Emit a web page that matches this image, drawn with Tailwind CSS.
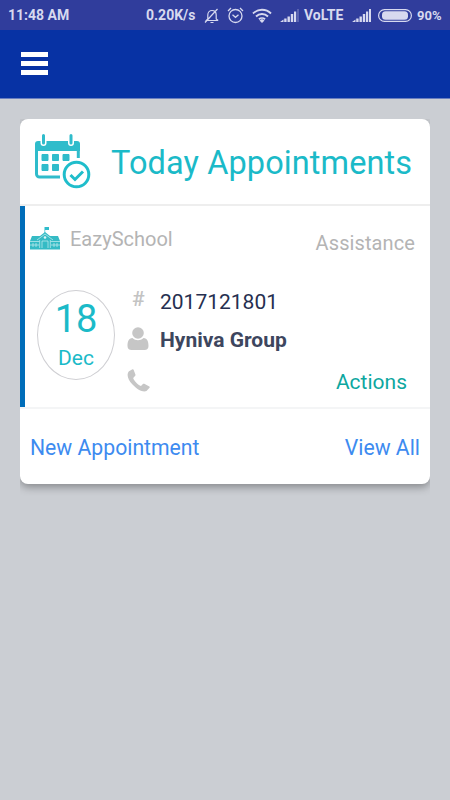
<!DOCTYPE html>
<html lang="en">
  <head>
    <meta charset="UTF-8" />
    <meta name="viewport" content="width=device-width, initial-scale=1.0" />
    <title>Today Appointments</title>
    <script src="https://cdn.jsdelivr.net/npm/@tailwindcss/browser@4"></script>
  </head>
  <body class="bg-[#cbced3] h-screen overflow-hidden font-['Roboto',sans-serif] whitespace-nowrap">
    <!-- Status bar -->
    <div class="h-[30px] bg-[#303d9c] text-[#d7d9ef] flex items-center pl-2 pr-2 pt-px text-[14px] font-bold">
      <span class="w-[138px]">11:48 AM</span>
      <span class="w-[58px]">0.20K/s</span>
      <svg class="w-[16px] h-[16px]" viewBox="0 0 16 16" fill="none" stroke="currentColor" stroke-width="1.2">
        <path d="M1.500 12.500h12.500M3.800 11V7c0-6 8.400-6 8.400 0v4l2 1.500M3.800 11l-1.500 1.500M6.500 14.500h3M1 14.500L13.500 1" />
      </svg>
      <svg class="w-[17px] h-[17px] ml-[7px]" viewBox="0 0 17 17" fill="none" stroke="currentColor" stroke-width="1.300">
        <circle cx="8.500" cy="9" r="6.500" />
        <path d="M5.500 7.800l3 2.500 3-2.500M1 4l3-3M16 4l-3-3" />
      </svg>
      <svg class="w-[20px] h-[15px] ml-[8px]" viewBox="0 0 20 15" fill="none" stroke="currentColor" stroke-width="1.900">
        <path d="M1 5.500a12.700 12.700 0 0 1 18 0M4 8.500a8.500 8.500 0 0 1 12 0M7 11.300a4.300 4.300 0 0 1 6 0" />
        <path d="M10 11l2.500 1.500-2.500 2.500-2.500-2.500z" fill="currentColor" stroke="none" />
      </svg>
      <svg class="w-[19px] h-[13px] ml-[8px]" viewBox="0 0 19 13" fill="currentColor">
        <path d="M0 13l3.500-2.500V13zM4.200 9.500h2.400V13H4.200zM7.500 7.500h2.400V13H7.500zM10.800 5h2.400v8h-2.400zM14 2.500h2.200V13H14z" />
        <path d="M17 0h2v13h-2z" opacity=".25" />
      </svg>
      <span class="ml-[5px] w-[40px]">VoLTE</span>
      <svg class="w-[19px] h-[13px] ml-[8px]" viewBox="0 0 19 13" fill="currentColor">
        <path d="M0 13l3.500-2.500V13zM4.200 9.500h2.400V13H4.200zM7.500 7.500h2.400V13H7.500zM10.800 5h2.400v8h-2.400zM14 2.500h2.200V13H14zM17 0h2v13h-2z" />
      </svg>
      <svg class="w-[34px] h-[13px] ml-[7px]" viewBox="0 0 34 13">
        <rect x=".6" y=".6" width="32.800" height="11.800" rx="5.900" fill="none" stroke="currentColor" stroke-width="1.200" />
        <rect x="4" y="2.300" width="26" height="8.400" rx="3.500" fill="currentColor" />
      </svg>
      <span class="ml-[5px] text-[13px]">90%</span>
    </div>

    <!-- App bar -->
    <div class="h-[69px] bg-[#0732a4] border-b border-[#6a7fc0] px-[21px] pt-[22px]">
      <div class="w-[26.5px] flex flex-col gap-[4px]">
        <div class="h-[5px] bg-white"></div>
        <div class="h-[5px] bg-white"></div>
        <div class="h-[5px] bg-white"></div>
      </div>
    </div>

    <!-- Appointments card -->
    <div class="mx-5 mt-5 pb-3 overflow-hidden">
      <div class="h-[365px] bg-white rounded-[8px] shadow-[0_3px_8px_rgba(0,0,0,0.35)]">
        <div class="h-[87px] border-b-2 border-[#eeeeee] flex items-start pl-[15px]">
          <svg class="w-[56px] h-[56px] mt-[14px]" viewBox="0 0 56 56" fill="none">
            <path d="M3 8h39a3 3 0 0 1 3 3v7H0v-7a3 3 0 0 1 3-3z" fill="#2fbccb" />
            <path d="M1.500 16v25a3 3 0 0 0 3 3H25M43.300 16v9" stroke="#2fbccb" stroke-width="3" />
            <path d="M8.500 3v7M36 3v7" stroke="#fff" stroke-width="6" stroke-linecap="round" />
            <path d="M8.500 2.500v7.500M36 2.500v7.500" stroke="#2fbccb" stroke-width="3" stroke-linecap="round" />
            <path d="M7 21.500h6v6H7zM17.500 21.500h6v6h-6zM28 21.500h6v6h-6zM7 31.500h6v6H7zM17.500 31.500h6v6h-6z" fill="#2fbccb" stroke="#2fbccb" />
            <circle cx="41.500" cy="41.500" r="12.300" fill="#fff" stroke="#1fbdcb" stroke-width="3" />
            <path d="M35.500 42l4.500 4.500 8-8" stroke="#1fbdcb" stroke-width="3" />
          </svg>
          <h1 class="ml-[20px] mt-[24px] text-[32.5px] leading-[40px] tracking-[0.1px] text-[#1bbac8]">Today Appointments</h1>
        </div>

        <div class="h-[203px] border-b-2 border-[#f4f5f6] flex">
          <div class="w-[5px] h-[201px] bg-[#006db9]"></div>
          <div class="flex-1">
            <div class="flex h-[64px] pl-[5px] pr-[15px] text-[20px] text-[#b4b4b4]">
              <svg class="w-[30px] h-[23px] mt-[21px]" viewBox="0 0 30 23">
                <path d="M14.500 7V0h4.500v3h-3.800v4z" fill="#2fbccb" />
                <path d="M2 9h8l5-4 5 4h8l2 5v7.500H0V14zM0 21h30v1.500H0z" fill="#35bbc5" />
                <path d="M0 14.500h9.500M20.500 14.500H30M7 13l8-6 8 6M9.700 13v8M20.300 13v8M12 21v-7h6v7M3 16v4M6 16v4M24 16v4M27 16v4M0 18h9M21 18h9" stroke="#c9eff1" stroke-width=".7" fill="none" />
                <circle cx="15" cy="10.500" r="1.300" fill="#dff6f7" />
              </svg>
              <span class="ml-[10px] mt-[21px] leading-[24px]">EazySchool</span>
              <span class="ml-auto mt-[25px] leading-[24px] tracking-[0.1px]">Assistance</span>
            </div>

            <div class="flex pl-[12px] pr-[23px]">
              <div class="w-[78px] h-[90px] mt-[20px] rounded-[50%] border border-[#cfcfd3] text-[#1bbac8] text-center">
                <div class="text-[38px] leading-[40px] mt-[8px]">18</div>
                <div class="text-[21px] leading-[24px] mt-[7px]">Dec</div>
              </div>
              <div class="flex-1 ml-[12px] pt-[18px]">
                <div class="flex h-[26px] items-center">
                  <span class="w-[23px] ml-[5px] mr-[5px] text-[21px] leading-[24px] -mt-[4px] font-medium text-[#c3c3c3]">#</span>
                  <span class="text-[21px] leading-[24px] mt-[1px] text-[#262f50]">2017121801</span>
                </div>
                <div class="flex h-[26px] mt-[13px] items-center">
                  <svg class="w-[22px] h-[23px] mr-[11px] -mt-[3px]" viewBox="0 0 22 23" fill="#c6c6c6">
                    <circle cx="11" cy="6" r="5.800" />
                    <path d="M5.500 11c3 3 8 3 11 0 4 0 5 4 5 8 0 2.500-1.500 4-4 4h-13c-2.500 0-4-1.500-4-4 0-4 1-8 5-8z" />
                  </svg>
                  <span class="text-[21px] leading-[24px] font-bold text-[#3d465e]">Hyniva Group</span>
                </div>
                <div class="flex h-[26px] mt-[13px] items-center">
                  <svg class="w-[23px] h-[23px] mt-[2px]" viewBox="0 0 23 23" fill="#c6c6c6">
                    <path d="M5.500.3L2 2.200C-.5 5 .2 10 5.500 15.500S16 23.500 19.500 22l3-3.200c.4-.5.300-1-.2-1.400l-5-2.600c-.5-.2-1-.2-1.400.2L14 17C11 16.200 6.500 11 6.200 9l2-2.300c.3-.4.4-.8.2-1.300L6.600.700C6.400.2 6 0 5.500.3z" />
                  </svg>
                  <span class="ml-auto mt-[5px] text-[21px] leading-[24px] text-[#0da7a0]">Actions</span>
                </div>
              </div>
            </div>
          </div>
        </div>

        <div class="h-[75px] flex items-center justify-between px-[10px] pt-[2px] text-[21.2px] text-[#3d8bf0]">
          <span>New Appointment</span>
          <span>View All</span>
        </div>
      </div>
    </div>
  </body>
</html>
